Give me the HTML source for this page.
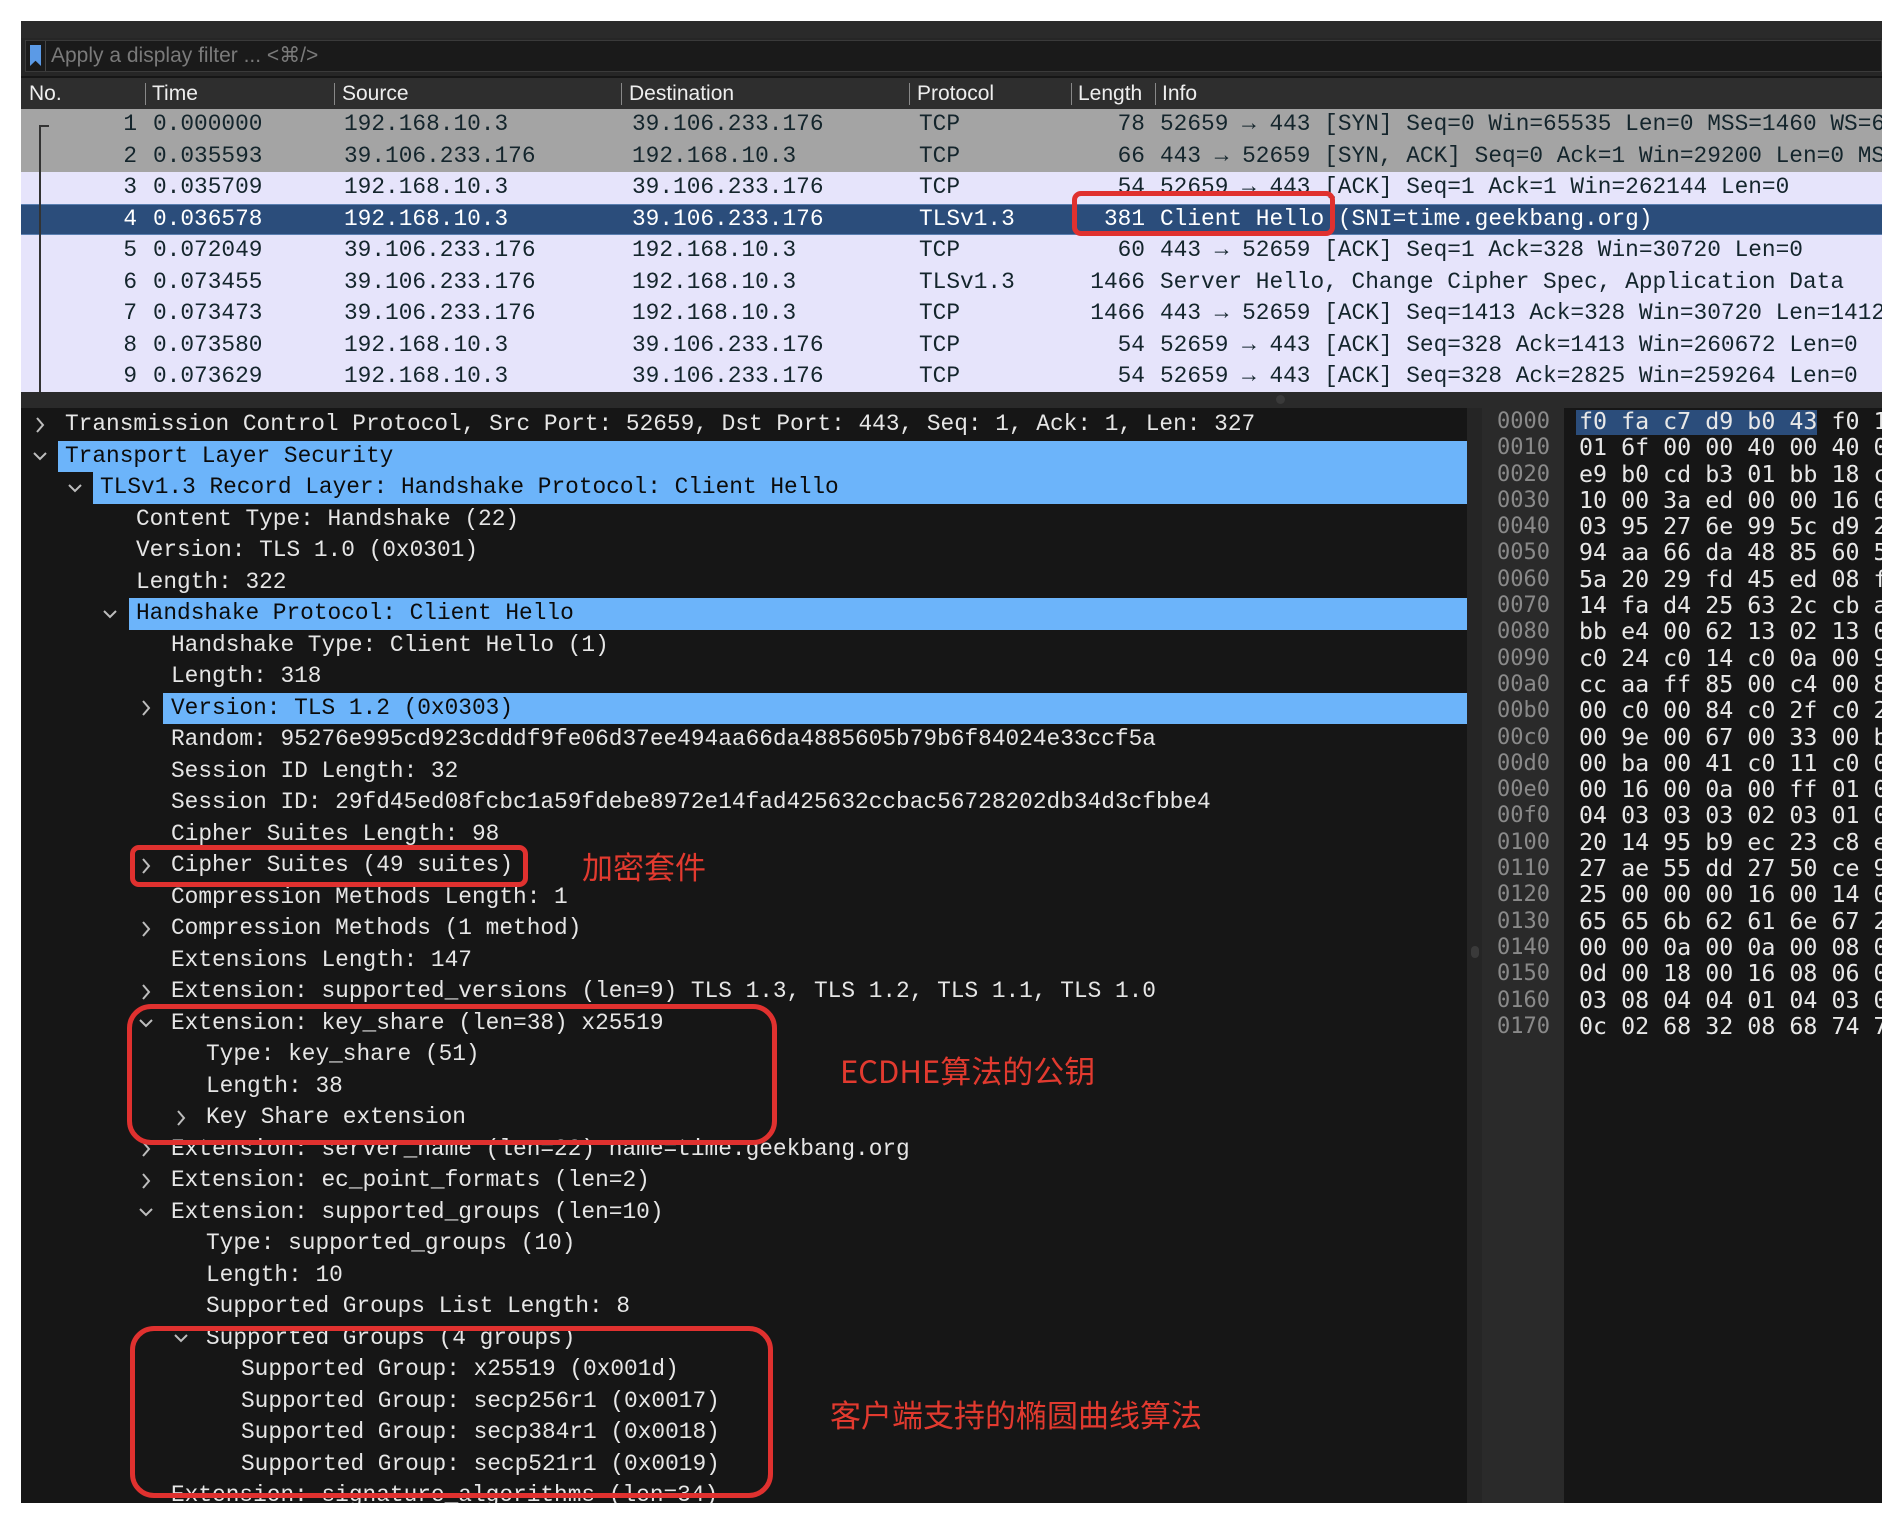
<!DOCTYPE html>
<html><head><meta charset="utf-8"><style>
*{margin:0;padding:0;box-sizing:border-box}
body{width:1901px;height:1524px;background:#fff;position:relative;overflow:hidden;font-family:"Liberation Mono","DejaVu Sans Mono",monospace}
.abs{position:absolute}
#win{left:21px;top:21px;width:1861px;height:1482px;background:#161616;overflow:hidden}
.mono{font-family:"Liberation Mono",monospace;font-size:22.8px;white-space:pre}
.prow{position:absolute;left:0;width:1861px;height:31.5px;line-height:31.5px;color:#14252c;overflow:hidden}
.prow span{position:absolute;top:0}
.hdr span{position:absolute;top:0;font-family:"Liberation Sans",sans-serif;font-size:21px;color:#eee;line-height:31px}
.sep{position:absolute;top:5px;width:1px;height:22px;background:#888}
.drow{position:absolute;height:31.5px;line-height:31.5px;color:#e6e6e6;white-space:pre;font-size:22.8px}
.hl{background:#6cb4fa;color:#0b0b0b}
.hex{position:absolute;font-family:"DejaVu Sans Mono",monospace;font-size:23.3px;line-height:26.3px;white-space:pre}
.red{position:absolute;border:5px solid #e0312f}
.ann{position:absolute;color:#e23a2f;font-family:"Noto Sans CJK SC","WenQuanYi Zen Hei",sans-serif;font-size:31px;white-space:nowrap;line-height:40px}
</style></head><body>
<div id="win" class="abs">
 <div class="abs" style="left:0;top:0;width:1861px;height:17px;background:#2a2a2a"></div>
 <div class="abs" style="left:0;top:17px;width:1861px;height:38px;background:#262626"></div>
 <div class="abs" style="left:4px;top:19px;width:1857px;height:32px;background:#1a1a1a;border:1px solid #3a3a3a"></div>
 <div class="abs" style="left:9px;top:24px;width:11px;height:21px;background:#5b9ae6;clip-path:polygon(0 0,100% 0,100% 100%,50% 75%,0 100%)"></div>
 <div class="abs" style="left:24px;top:20px;width:1px;height:30px;background:#444"></div>
 <div class="abs" style="left:30px;top:19px;font-family:'Liberation Sans',sans-serif;font-size:21px;line-height:32px;color:#7a7a7a">Apply a display filter ... &lt;⌘/&gt;</div>
 <div class="abs hdr" style="left:0;top:57px;width:1861px;height:31px;background:#2e2e2e">
  <span style="left:8px">No.</span>
  <div class="sep" style="left:124px"></div><span style="left:131px">Time</span>
  <div class="sep" style="left:313px"></div><span style="left:321px">Source</span>
  <div class="sep" style="left:600px"></div><span style="left:608px">Destination</span>
  <div class="sep" style="left:888px"></div><span style="left:896px">Protocol</span>
  <div class="sep" style="left:1050px"></div><span style="left:1057px;width:76px;overflow:hidden">Length</span>
  <div class="sep" style="left:1134px"></div><span style="left:1141px">Info</span>
 </div>
 <div class="abs" style="left:0;top:88px;width:1861px;height:283px;background:#e6e4fb"></div>
 <div class="mono">
 <div class="prow" style="top:88px;background:#a4a4a4"><span style="right:1745px">1</span><span style="left:132px">0.000000</span><span style="left:323px">192.168.10.3</span><span style="left:611px">39.106.233.176</span><span style="left:898px">TCP</span><span style="right:737px">78</span><span style="left:1139px">52659 → 443 [SYN] Seq=0 Win=65535 Len=0 MSS=1460 WS=64</span></div>
 <div class="prow" style="top:119.5px;background:#a4a4a4"><span style="right:1745px">2</span><span style="left:132px">0.035593</span><span style="left:323px">39.106.233.176</span><span style="left:611px">192.168.10.3</span><span style="left:898px">TCP</span><span style="right:737px">66</span><span style="left:1139px">443 → 52659 [SYN, ACK] Seq=0 Ack=1 Win=29200 Len=0 MSS=1460</span></div>
 <div class="prow" style="top:151px"><span style="right:1745px">3</span><span style="left:132px">0.035709</span><span style="left:323px">192.168.10.3</span><span style="left:611px">39.106.233.176</span><span style="left:898px">TCP</span><span style="right:737px">54</span><span style="left:1139px">52659 → 443 [ACK] Seq=1 Ack=1 Win=262144 Len=0</span></div>
 <div class="prow" style="top:182.5px;background:#2b4d7b;color:#fff;border-top:1px solid #5a7fb0;border-bottom:1px solid #5a7fb0;line-height:29.5px"><span style="right:1745px">4</span><span style="left:132px">0.036578</span><span style="left:323px">192.168.10.3</span><span style="left:611px">39.106.233.176</span><span style="left:898px">TLSv1.3</span><span style="right:737px">381</span><span style="left:1139px">Client Hello (SNI=time.geekbang.org)</span></div>
 <div class="prow" style="top:214px"><span style="right:1745px">5</span><span style="left:132px">0.072049</span><span style="left:323px">39.106.233.176</span><span style="left:611px">192.168.10.3</span><span style="left:898px">TCP</span><span style="right:737px">60</span><span style="left:1139px">443 → 52659 [ACK] Seq=1 Ack=328 Win=30720 Len=0</span></div>
 <div class="prow" style="top:245.5px"><span style="right:1745px">6</span><span style="left:132px">0.073455</span><span style="left:323px">39.106.233.176</span><span style="left:611px">192.168.10.3</span><span style="left:898px">TLSv1.3</span><span style="right:737px">1466</span><span style="left:1139px">Server Hello, Change Cipher Spec, Application Data</span></div>
 <div class="prow" style="top:277px"><span style="right:1745px">7</span><span style="left:132px">0.073473</span><span style="left:323px">39.106.233.176</span><span style="left:611px">192.168.10.3</span><span style="left:898px">TCP</span><span style="right:737px">1466</span><span style="left:1139px">443 → 52659 [ACK] Seq=1413 Ack=328 Win=30720 Len=1412</span></div>
 <div class="prow" style="top:308.5px"><span style="right:1745px">8</span><span style="left:132px">0.073580</span><span style="left:323px">192.168.10.3</span><span style="left:611px">39.106.233.176</span><span style="left:898px">TCP</span><span style="right:737px">54</span><span style="left:1139px">52659 → 443 [ACK] Seq=328 Ack=1413 Win=260672 Len=0</span></div>
 <div class="prow" style="top:340px"><span style="right:1745px">9</span><span style="left:132px">0.073629</span><span style="left:323px">192.168.10.3</span><span style="left:611px">39.106.233.176</span><span style="left:898px">TCP</span><span style="right:737px">54</span><span style="left:1139px">52659 → 443 [ACK] Seq=328 Ack=2825 Win=259264 Len=0</span></div>
 </div>
 <div class="abs" style="left:18px;top:104px;width:2px;height:267px;background:#333"></div>
 <div class="abs" style="left:18px;top:104px;width:10px;height:2px;background:#333"></div>
 <div class="abs" style="left:0;top:371px;width:1861px;height:16px;background:#2a2a2a"></div>
 <div class="abs" style="left:1255px;top:374px;width:9px;height:9px;border-radius:50%;background:#3a3a3a"></div>
 <div class="abs" style="left:1446px;top:387px;width:15px;height:1095px;background:#252525"></div>
 <div class="abs" style="left:1450px;top:925px;width:8px;height:12px;border-radius:4px;background:#3a3a3a"></div>
 <div class="abs" style="left:1461px;top:387px;width:82px;height:1095px;background:#2a2a2a"></div>
</div>

<div class="mono" id="det">
<div class="drow" style="left:65px;top:409px">Transmission Control Protocol, Src Port: 52659, Dst Port: 443, Seq: 1, Ack: 1, Len: 327</div>
<div class="drow hl" style="left:58px;width:1409px;top:440.5px;padding-left:7px">Transport Layer Security</div>
<div class="drow hl" style="left:93px;width:1374px;top:472px;padding-left:7px">TLSv1.3 Record Layer: Handshake Protocol: Client Hello</div>
<div class="drow" style="left:136px;top:503.5px">Content Type: Handshake (22)</div>
<div class="drow" style="left:136px;top:535px">Version: TLS 1.0 (0x0301)</div>
<div class="drow" style="left:136px;top:566.5px">Length: 322</div>
<div class="drow hl" style="left:129px;width:1338px;top:598px;padding-left:7px">Handshake Protocol: Client Hello</div>
<div class="drow" style="left:171px;top:629.5px">Handshake Type: Client Hello (1)</div>
<div class="drow" style="left:171px;top:661px">Length: 318</div>
<div class="drow hl" style="left:163px;width:1304px;top:692.5px;padding-left:8px">Version: TLS 1.2 (0x0303)</div>
<div class="drow" style="left:171px;top:724px">Random: 95276e995cd923cdddf9fe06d37ee494aa66da4885605b79b6f84024e33ccf5a</div>
<div class="drow" style="left:171px;top:755.5px">Session ID Length: 32</div>
<div class="drow" style="left:171px;top:787px">Session ID: 29fd45ed08fcbc1a59fdebe8972e14fad425632ccbac56728202db34d3cfbbe4</div>
<div class="drow" style="left:171px;top:818.5px">Cipher Suites Length: 98</div>
<div class="drow" style="left:171px;top:850px">Cipher Suites (49 suites)</div>
<div class="drow" style="left:171px;top:881.5px">Compression Methods Length: 1</div>
<div class="drow" style="left:171px;top:913px">Compression Methods (1 method)</div>
<div class="drow" style="left:171px;top:944.5px">Extensions Length: 147</div>
<div class="drow" style="left:171px;top:976px">Extension: supported_versions (len=9) TLS 1.3, TLS 1.2, TLS 1.1, TLS 1.0</div>
<div class="drow" style="left:171px;top:1007.5px">Extension: key_share (len=38) x25519</div>
<div class="drow" style="left:206px;top:1039px">Type: key_share (51)</div>
<div class="drow" style="left:206px;top:1070.5px">Length: 38</div>
<div class="drow" style="left:206px;top:1102px">Key Share extension</div>
<div class="drow" style="left:171px;top:1133.5px">Extension: server_name (len=22) name=time.geekbang.org</div>
<div class="drow" style="left:171px;top:1165px">Extension: ec_point_formats (len=2)</div>
<div class="drow" style="left:171px;top:1196.5px">Extension: supported_groups (len=10)</div>
<div class="drow" style="left:206px;top:1228px">Type: supported_groups (10)</div>
<div class="drow" style="left:206px;top:1259.5px">Length: 10</div>
<div class="drow" style="left:206px;top:1291px">Supported Groups List Length: 8</div>
<div class="drow" style="left:206px;top:1322.5px">Supported Groups (4 groups)</div>
<div class="drow" style="left:241px;top:1354px">Supported Group: x25519 (0x001d)</div>
<div class="drow" style="left:241px;top:1385.5px">Supported Group: secp256r1 (0x0017)</div>
<div class="drow" style="left:241px;top:1417px">Supported Group: secp384r1 (0x0018)</div>
<div class="drow" style="left:241px;top:1448.5px">Supported Group: secp521r1 (0x0019)</div>
<div class="drow" style="left:171px;top:1480px;height:23px;overflow:hidden">Extension: signature_algorithms (len=34)</div>
</div>

<svg class="abs" style="left:0;top:0" width="1901" height="1524">
<g fill="none" stroke="#bdbdbd" stroke-width="2">
<path d="M37 418l6 7-6 7"/>
<path d="M34 453l6 6 6-6" />
<path d="M69 485l6 6 6-6" />
<path d="M104 611l6 6 6-6" />
<path d="M143 701l6 7-6 7"/>
<path d="M143 859l6 7-6 7"/>
<path d="M143 922l6 7-6 7"/>
<path d="M143 985l6 7-6 7"/>
<path d="M140 1020l6 6 6-6"/>
<path d="M178 1111l6 7-6 7"/>
<path d="M143 1142l6 7-6 7"/>
<path d="M143 1174l6 7-6 7"/>
<path d="M140 1209l6 6 6-6"/>
<path d="M175 1335l6 6 6-6"/>
</g>
</svg>

<div class="hex" style="left:1497px;top:409px;color:#8a8a8a;font-size:22px">0000
0010
0020
0030
0040
0050
0060
0070
0080
0090
00a0
00b0
00c0
00d0
00e0
00f0
0100
0110
0120
0130
0140
0150
0160
0170</div>
<div class="abs" style="left:1576px;top:410px;width:241px;height:25px;background:#2b4d7b"></div>
<div class="hex" style="left:1579px;top:409px;color:#e8e8e8;width:303px;overflow:hidden">f0 fa c7 d9 b0 43 f0 18
01 6f 00 00 40 00 40 06
e9 b0 cd b3 01 bb 18 c4
10 00 3a ed 00 00 16 03
03 95 27 6e 99 5c d9 23
94 aa 66 da 48 85 60 5b
5a 20 29 fd 45 ed 08 fc
14 fa d4 25 63 2c cb ac
bb e4 00 62 13 02 13 03
c0 24 c0 14 c0 0a 00 9f
cc aa ff 85 00 c4 00 88
00 c0 00 84 c0 2f c0 2b
00 9e 00 67 00 33 00 be
00 ba 00 41 c0 11 c0 07
00 16 00 0a 00 ff 01 00
04 03 03 03 02 03 01 00
20 14 95 b9 ec 23 c8 e1
27 ae 55 dd 27 50 ce 9a
25 00 00 00 16 00 14 00
65 65 6b 62 61 6e 67 2e
00 00 0a 00 0a 00 08 00
0d 00 18 00 16 08 06 08
03 08 04 04 01 04 03 02
0c 02 68 32 08 68 74 74</div>

<div class="red" style="left:1072px;top:191px;width:263px;height:45px;border-radius:9px"></div>
<div class="red" style="left:130px;top:845px;width:398px;height:42px;border-radius:9px"></div>
<div class="red" style="left:127px;top:1004px;width:650px;height:141px;border-radius:24px"></div>
<div class="red" style="left:130px;top:1326px;width:643px;height:172px;border-radius:24px"></div>

<div class="ann" style="left:582px;top:846px">加密套件</div>
<div class="ann" style="left:840px;top:1050px">ECDHE算法的公钥</div>
<div class="ann" style="left:830px;top:1394px">客户端支持的椭圆曲线算法</div>
</body></html>
